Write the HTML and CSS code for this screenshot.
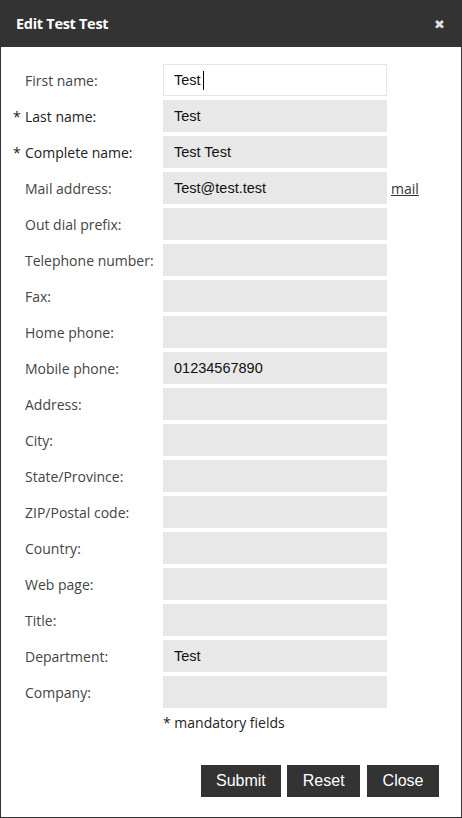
FILE: index.html
```html
<!DOCTYPE html>
<html>
<head>
<meta charset="utf-8">
<link rel="stylesheet" href="styles.css">
</head>
<body>
<div class="dialog">
  <div class="header">
    <span class="title">Edit Test Test</span>
    <span class="close">&#x2716;</span>
  </div>
  <div class="body">
    <div class="row"><label class="lbl">First name:</label><div class="field"><input class="inp focus" value="Test"><span class="caret"></span></div></div>
    <div class="row"><label class="lbl req"><span class="star">*</span>Last name:</label><div class="field"><input class="inp" value="Test"></div></div>
    <div class="row"><label class="lbl req"><span class="star">*</span>Complete name:</label><div class="field"><input class="inp" value="Test Test"></div></div>
    <div class="row"><label class="lbl">Mail address:</label><div class="field"><input class="inp" value="Test@test.test"></div><a class="mail" href="#">mail</a></div>
    <div class="row"><label class="lbl">Out dial prefix:</label><div class="field"><input class="inp" value=""></div></div>
    <div class="row"><label class="lbl">Telephone number:</label><div class="field"><input class="inp" value=""></div></div>
    <div class="row"><label class="lbl">Fax:</label><div class="field"><input class="inp" value=""></div></div>
    <div class="row"><label class="lbl">Home phone:</label><div class="field"><input class="inp" value=""></div></div>
    <div class="row"><label class="lbl">Mobile phone:</label><div class="field"><input class="inp" value="01234567890"></div></div>
    <div class="row"><label class="lbl">Address:</label><div class="field"><input class="inp" value=""></div></div>
    <div class="row"><label class="lbl">City:</label><div class="field"><input class="inp" value=""></div></div>
    <div class="row"><label class="lbl">State/Province:</label><div class="field"><input class="inp" value=""></div></div>
    <div class="row"><label class="lbl">ZIP/Postal code:</label><div class="field"><input class="inp" value=""></div></div>
    <div class="row"><label class="lbl">Country:</label><div class="field"><input class="inp" value=""></div></div>
    <div class="row"><label class="lbl">Web page:</label><div class="field"><input class="inp" value=""></div></div>
    <div class="row"><label class="lbl">Title:</label><div class="field"><input class="inp" value=""></div></div>
    <div class="row"><label class="lbl">Department:</label><div class="field"><input class="inp" value="Test"></div></div>
    <div class="row"><label class="lbl">Company:</label><div class="field"><input class="inp" value=""></div></div>
    <div class="note">* mandatory fields</div>
    <div class="buttons">
      <button class="btn">Submit</button>
      <button class="btn">Reset</button>
      <button class="btn last">Close</button>
    </div>
  </div>
</div>
</body>
</html>
```

FILE: styles.css
```css
html, body {
  margin: 0;
  padding: 0;
  background: #fff;
}
.dialog {
  width: 462px;
  height: 818px;
  box-sizing: border-box;
  border: 1px solid #333;
  border-top: none;
  display: flex;
  flex-direction: column;
  font-family: "Open Sans", "Liberation Sans", sans-serif;
}
.header {
  height: 47px;
  background: #333;
  display: flex;
  align-items: center;
  justify-content: space-between;
  padding: 0 17px 0 16px;
  margin: 0 -1px;
  flex-shrink: 0;
}
.title {
  color: #fff;
  font-weight: 700;
  font-size: 14.5px;
  letter-spacing: -0.3px;
}
.close {
  color: #ddd;
  font-size: 13px;
  font-family: "DejaVu Sans", sans-serif;
  font-weight: bold;
  margin-top: 1px;
}
.body {
  padding: 17px 22px 0 0;
  display: flex;
  flex-direction: column;
  gap: 4px;
}
.row {
  display: flex;
  align-items: center;
  height: 32px;
}
.lbl {
  width: 138px;
  padding-left: 24px;
  flex-shrink: 0;
  font-size: 14px;
  color: #444;
  position: relative;
  white-space: nowrap;
}
.lbl.req {
  color: #222;
}
.star {
  position: absolute;
  left: 12px;
  top: 0;
}
.field {
  position: relative;
  width: 224px;
  height: 32px;
  flex-shrink: 0;
}
.inp {
  box-sizing: border-box;
  width: 224px;
  height: 32px;
  border: none;
  background: #e8e8e8;
  padding: 0 10px 0 11px;
  margin: 0;
  font-family: "Liberation Sans", Arial, sans-serif;
  font-size: 14.5px;
  color: #111;
  outline: none;
}
.inp.focus {
  background: #fff;
  border: 1px solid #e6e6e6;
  padding: 0 9px 0 10px;
}
.caret {
  position: absolute;
  left: 40px;
  top: 7px;
  width: 1px;
  height: 19px;
  background: #000;
}
.mail {
  margin-left: 4px;
  font-size: 14px;
  color: #333;
  text-decoration: underline;
}
.note {
  margin-left: 162px;
  margin-top: 1px;
  font-size: 14px;
  color: #222;
}
.buttons {
  margin-top: 29px;
  display: flex;
  justify-content: flex-end;
  gap: 6px;
}
.btn {
  height: 32px;
  background: #333;
  color: #fff;
  border: none;
  padding: 0 15.5px;
  margin: 0;
  font-family: "Liberation Sans", Arial, sans-serif;
  font-size: 16px;
  cursor: pointer;
}
.btn.last {
  margin-left: 1px;
}
```
